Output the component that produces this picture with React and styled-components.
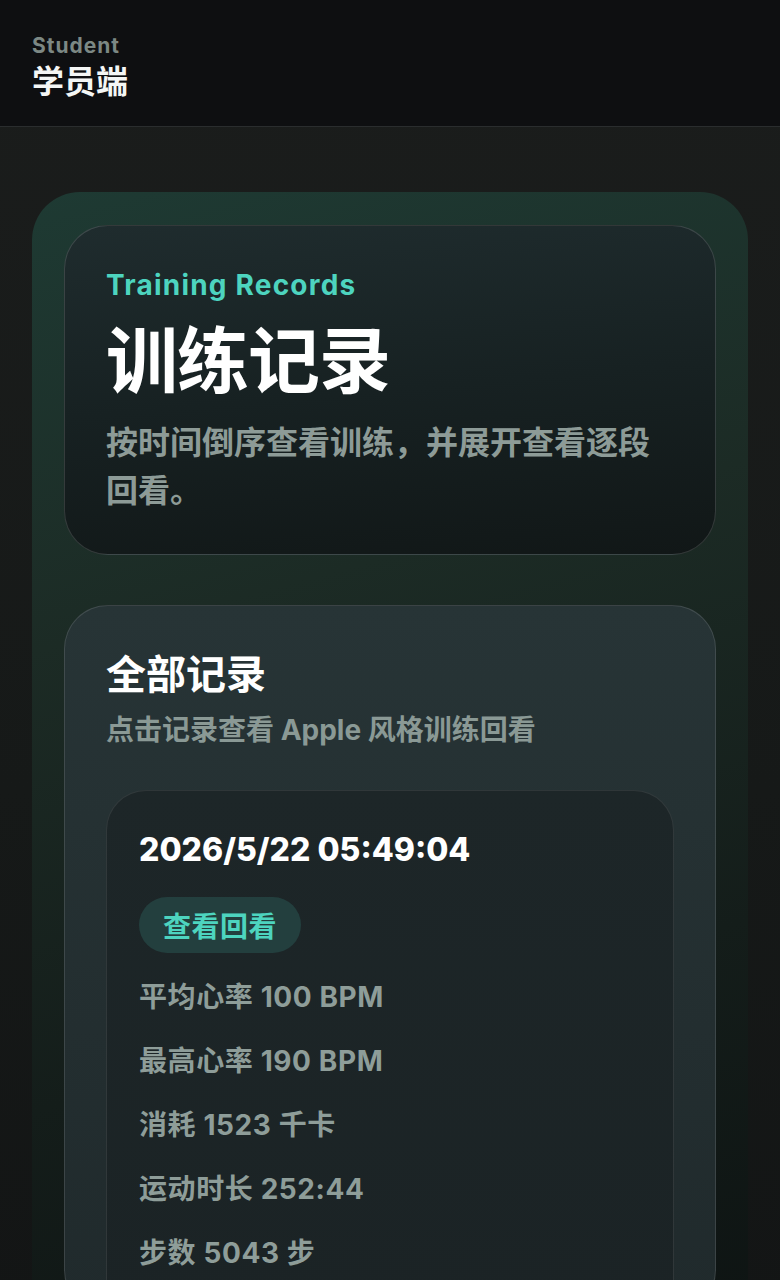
import React from 'react';
import styled, { createGlobalStyle } from 'styled-components';

const GlobalStyle = createGlobalStyle`
    * {
        box-sizing: border-box;
    }
    html, body {
        margin: 0;
        padding: 0;
        background: #161918;
    }
    body {
        font-family: Inter, 'Noto Sans CJK SC', sans-serif;
        color: #ffffff;
    }
`;

const Page = styled.div`
    min-height: 1280px;
    background: linear-gradient(180deg, #1b1d1c 0%, #161918 60%, #131515 100%);
    overflow: hidden;
`;

const Header = styled.header`
    background: #0e0f11;
    border-bottom: 1px solid #2a2d2e;
    padding: 32px 32px 24px;
    display: flex;
    flex-direction: column;
    gap: 2px;
`;

const Role = styled.div`
    font-size: 21px;
    line-height: 28px;
    font-weight: 700;
    letter-spacing: 1px;
    color: #7c8884;
`;

const RoleName = styled.div`
    font-size: 32px;
    line-height: 40px;
    font-weight: 700;
    color: #f4f6f5;
`;

const Panel = styled.main`
    margin: 65px 32px 0;
    padding: 33px 32px 0;
    border-radius: 48px 48px 0 0;
    background: linear-gradient(165deg, #1e3a33 0%, #1c2b25 35%, #141d1a 70%, #0e1413 100%);
    display: flex;
    flex-direction: column;
    gap: 50px;
`;

const Card = styled.section`
    border-radius: 44px;
    border: 1px solid ${(p) => (p.$hero ? 'rgba(255,255,255,0.14)' : 'rgba(255,255,255,0.12)')};
    background: ${(p) =>
        p.$hero
            ? 'linear-gradient(175deg, #1f2c2e 0%, #172122 50%, #111717 100%)'
            : 'linear-gradient(180deg, #273436 0%, #232e30 60%, #202a2c 100%)'};
    padding: ${(p) => (p.$hero ? '41px 41px 39px' : '41px 41px 0')};
    display: flex;
    flex-direction: column;
`;

const Eyebrow = styled.div`
    font-size: 28px;
    line-height: 36px;
    font-weight: 700;
    color: #4dd4bf;
    letter-spacing: 1.2px;
`;

const Title = styled.h1`
    margin: 18px 0 0;
    font-size: 72px;
    line-height: 80px;
    font-weight: 700;
    letter-spacing: -1px;
    color: #ffffff;
`;

const Lead = styled.p`
    margin: 18px 0 0;
    font-size: 32px;
    line-height: 48px;
    font-weight: 700;
    color: #8d9b97;
`;

const SectionTitle = styled.h2`
    margin: 0;
    font-size: 40px;
    line-height: 56px;
    font-weight: 700;
    color: #ffffff;
`;

const SectionSub = styled.p`
    margin: 7px 0 0;
    font-size: 28px;
    line-height: 40px;
    font-weight: 700;
    color: #8a9995;
`;

const Record = styled.article`
    margin-top: 40px;
    border-radius: 40px 40px 0 0;
    border: 1px solid rgba(255,255,255,0.09);
    border-bottom: none;
    background: linear-gradient(180deg, #1d2628 0%, #1b2325 100%);
    padding: 36px 32px 40px;
    display: flex;
    flex-direction: column;
    align-items: flex-start;
    gap: 24px;
`;

const Stamp = styled.div`
    font-size: 32px;
    line-height: 46px;
    font-weight: 800;
    color: #ffffff;
`;

const ReplayButton = styled.button`
    height: 56px;
    padding: 0 24px;
    border: none;
    border-radius: 28px;
    background: #233f3e;
    color: #4dd4bf;
    font-family: inherit;
    font-size: 28px;
    font-weight: 700;
    letter-spacing: 0.5px;
    cursor: pointer;
`;

const Stat = styled.div`
    font-size: 28px;
    line-height: 40px;
    font-weight: 700;
    letter-spacing: 0.6px;
    color: #8e9d99;
`;

const stats = [
    '平均心率 100 BPM',
    '最高心率 190 BPM',
    '消耗 1523 千卡',
    '运动时长 252:44',
    '步数 5043 步',
];

const App = () => {
    return (
        <Page>
            <GlobalStyle />
            <Header>
                <Role>Student</Role>
                <RoleName>学员端</RoleName>
            </Header>
            <Panel>
                <Card $hero>
                    <Eyebrow>Training Records</Eyebrow>
                    <Title>训练记录</Title>
                    <Lead>按时间倒序查看训练，并展开查看逐段回看。</Lead>
                </Card>
                <Card>
                    <SectionTitle>全部记录</SectionTitle>
                    <SectionSub>点击记录查看 Apple 风格训练回看</SectionSub>
                    <Record>
                        <Stamp>2026/5/22 05:49:04</Stamp>
                        <ReplayButton>查看回看</ReplayButton>
                        {stats.map((s) => (
                            <Stat key={s}>{s}</Stat>
                        ))}
                    </Record>
                </Card>
            </Panel>
        </Page>
    );
};

export default App;
